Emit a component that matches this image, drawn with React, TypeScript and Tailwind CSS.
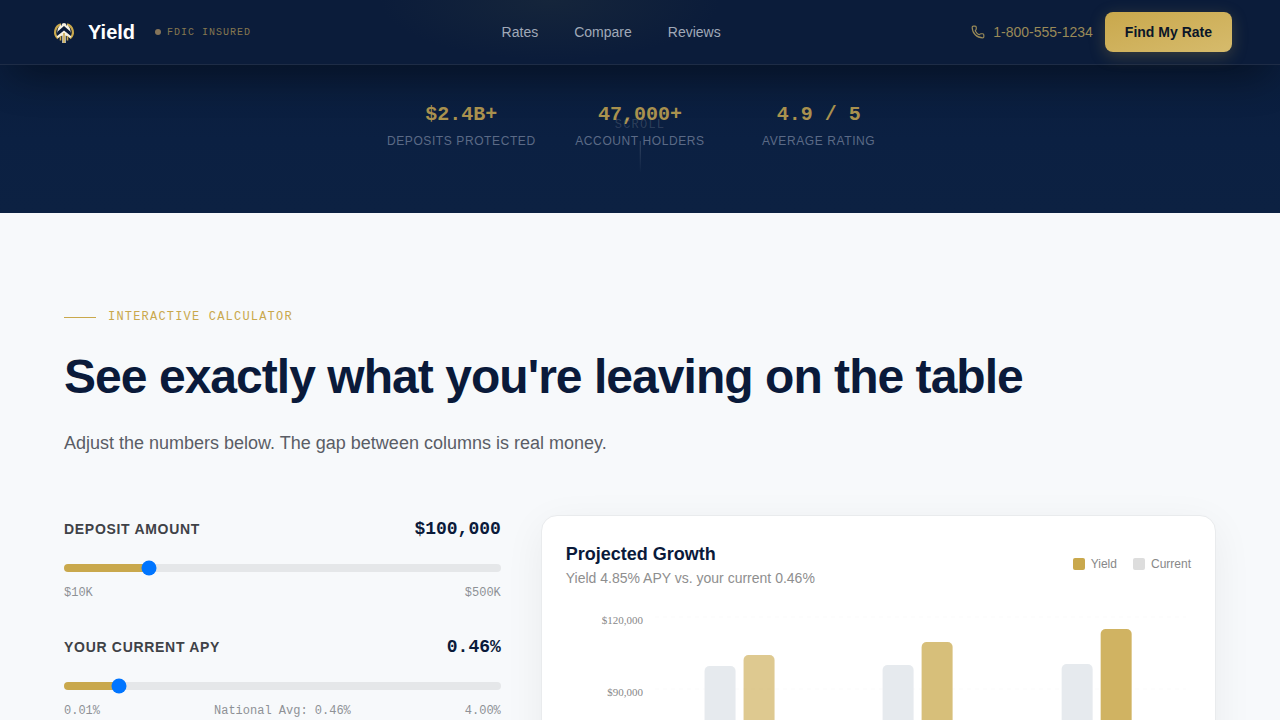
import * as React from "react"
import { Phone } from "lucide-react"

const navLinks = ["Rates", "Compare", "Reviews"]

const stats = [
  { value: "$2.4B+", label: "Deposits Protected" },
  { value: "47,000+", label: "Account Holders" },
  { value: "4.9 / 5", label: "Average Rating" },
]

const bars = [
  { label: "Year 1", x: 139, current: 54, gain: 43, opacity: 0.62 },
  { label: "Year 3", x: 317, current: 53, gain: 30, opacity: 0.74 },
  { label: "Year 5", x: 496, current: 52, gain: 17, opacity: 0.88 },
]

const ticks = [
  { label: "$120,000", y: 5 },
  { label: "$90,000", y: 77 },
  { label: "$60,000", y: 149 },
  { label: "$30,000", y: 221 },
  { label: "$0", y: 293 },
]

const BASELINE = 293

function Logo() {
  return (
    <svg viewBox="0 0 32 32" className="h-8 w-8" aria-hidden="true">
      <path d="M10 22.5A8.200 8.200 0 0 1 13 8.400M22 22.500A8.200 8.200 0 0 0 19 8.400" fill="none" stroke="#c9a84c" strokeWidth="2.2" />
      <path d="M9.500 16.500c-.5-4 2.500-8.500 6.500-9.500 4 1 7 5.500 6.500 9.500L16 12z" fill="#f6f1e2" />
      <path d="M13.500 6.500v3M18.500 6.500v3" stroke="#0b1c3a" strokeWidth="0.8" />
      <path d="M10.500 16.500 16 11.500l5.500 5" fill="none" stroke="#0b1c3a" strokeWidth="2.400" />
      <path d="M8.500 20.500 16 14.500l7.500 6-1.500 1.500-4.300-2.600V27h-3.400v-7.600L10 22z" fill="#f6f1e2" />
      <path d="M16 17v10M12.500 20v4.500M19.500 20v4.500" stroke="#c9a84c" strokeWidth="1.6" />
    </svg>
  )
}

function Header() {
  return (
    <header className="relative z-10 border-b border-[#1e2c46] bg-[#0b1c3a] bg-[radial-gradient(ellipse_170px_60px_at_43%_0%,#15253b,transparent)] shadow-[0_20px_40px_-12px_rgba(0,0,0,0.45)]">
      <div className="flex h-16 items-center justify-between px-12">
        <div className="flex items-center">
          <a href="#" className="flex items-center gap-2 text-xl font-bold text-white">
            <Logo />
            Yield
          </a>
          <span className="ml-5 flex items-center gap-1.5 font-['Liberation_Mono',monospace] text-[10px] tracking-widest text-[#857750]">
            <span className="h-1.5 w-1.5 rounded-full bg-[#85745a]" />
            FDIC INSURED
          </span>
        </div>

        <nav className="flex items-center gap-9 text-sm text-[#a0a9b8]">
          {navLinks.map((link) => (
            <a key={link} href={"#" + link.toLowerCase()}>{link}</a>
          ))}
        </nav>

        <div className="flex items-center gap-3">
          <a href="tel:18005551234" className="flex items-center gap-2 text-sm text-[#9a8a58]">
            <Phone className="h-3.5 w-3.5" />
            1-800-555-1234
          </a>
          <button className="h-10 rounded-lg bg-linear-to-br from-[#c9a84c] to-[#d6bb6c] px-5 text-sm font-semibold text-[#0a1628] shadow-[0_4px_16px_rgba(201,168,76,0.25)]">
            Find My Rate
          </button>
        </div>
      </div>
    </header>
  )
}

function Hero() {
  return (
    <section className="relative bg-linear-to-b from-[#0a1d3c] via-[#0b2042] to-[#0c2142] px-16 pt-9 pb-16">
      <div className="mx-auto grid max-w-lg grid-cols-3 gap-6 text-center">
        {stats.map((stat) => (
          <div key={stat.label}>
            <div className="font-['Liberation_Mono',monospace] text-xl font-bold text-[#ab934f]">{stat.value}</div>
            <div className="mt-1 text-xs tracking-wider whitespace-nowrap text-[#5b6a86] uppercase">{stat.label}</div>
          </div>
        ))}
      </div>
      <div className="absolute bottom-10 left-1/2 flex -translate-x-1/2 flex-col items-center gap-2">
        <span className="font-['Liberation_Mono',monospace] text-xs tracking-widest text-white/15">SCROLL</span>
        <span className="h-8 w-px bg-linear-to-b from-white/20 to-transparent" />
      </div>
    </section>
  )
}

interface SliderFieldProps {
  id: string
  label: string
  display: string
  min: number
  max: number
  step: number
  value: number
  hints: string[]
  onChange: (value: number) => void
}

function SliderField({ id, label, display, min, max, step, value, hints, onChange }: SliderFieldProps) {
  const percent = ((value - min) / (max - min)) * 100

  return (
    <div>
      <div className="flex items-center justify-between">
        <label htmlFor={id} className="text-sm font-semibold tracking-wider text-[#3f4247] uppercase">{label}</label>
        <span className="font-['Liberation_Mono',monospace] text-lg font-bold text-[#0a1a3a]">{display}</span>
      </div>
      <div className="mt-4 flex h-[18px] items-center">
        <input
          id={id}
          type="range"
          min={min}
          max={max}
          step={step}
          value={value}
          onChange={(e) => onChange(Number(e.target.value))}
          className="h-2 w-full cursor-pointer appearance-none rounded-full"
          style={{ background: `linear-gradient(to right, #c9a84c ${percent}%, #e5e7e9 ${percent}%)` }}
        />
      </div>
      <div className="mt-2 flex justify-between font-['Liberation_Mono',monospace] text-xs text-[#8e9196]">
        {hints.map((hint) => (
          <span key={hint}>{hint}</span>
        ))}
      </div>
    </div>
  )
}

function GrowthChart() {
  return (
    <svg viewBox="0 0 625 328" className="mt-6 w-full" role="img" aria-label="Projected growth by year">
      {ticks.map((tick) => (
        <g key={tick.label}>
          <line x1="89" x2="620" y1={tick.y} y2={tick.y} stroke="#000" strokeOpacity="0.02" strokeDasharray="4 4" />
          <text x="77" y={tick.y + 7} textAnchor="end" fontSize="11" fill="#888" className="font-['Liberation_Serif',serif]">
            {tick.label}
          </text>
        </g>
      ))}
      {bars.map((bar) => (
        <g key={bar.label}>
          <rect x={bar.x - 0.5} y={bar.current} width="31" height={BASELINE - bar.current} rx="5" fill="#e6eaee" />
          <rect x={bar.x + 38.5} y={bar.gain} width="31" height={BASELINE - bar.gain} rx="5" fill="#c9a84c" fillOpacity={bar.opacity} />
          <text x={bar.x + 34} y="312" textAnchor="middle" fontSize="11" fill="#888" className="font-['Liberation_Serif',serif]">
            {bar.label}
          </text>
        </g>
      ))}
    </svg>
  )
}

function Calculator() {
  const [deposit, setDeposit] = React.useState(100000)
  const [apy, setApy] = React.useState(0.46)

  return (
    <section className="px-16 pt-24 pb-24">
      <div className="mx-auto max-w-6xl">
        <div className="flex items-center gap-3">
          <span className="h-px w-8 bg-[#c9a84c]" />
          <span className="font-['Liberation_Mono',monospace] text-xs tracking-widest text-[#c9a84c]">INTERACTIVE CALCULATOR</span>
        </div>
        <h2 className="mt-6 text-5xl leading-14 font-bold tracking-[-0.02em] text-[#0a1a3a]">
          See exactly what you're leaving on the table
        </h2>
        <p className="mt-6 text-lg leading-7 text-[#5a5d66]">
          Adjust the numbers below. The gap between columns is real money.
        </p>

        <div className="mt-[58px] grid grid-cols-5 items-start gap-10">
          <div className="col-span-2 flex flex-col gap-8">
            <SliderField
              id="deposit"
              label="Deposit Amount"
              display={"$" + deposit.toLocaleString("en-US")}
              min={10000}
              max={500000}
              step={5000}
              value={deposit}
              hints={["$10K", "$500K"]}
              onChange={setDeposit}
            />
            <SliderField
              id="apy"
              label="Your Current APY"
              display={apy.toFixed(2) + "%"}
              min={0.01}
              max={4}
              step={0.01}
              value={apy}
              hints={["0.01%", "National Avg: 0.46%", "4.00%"]}
              onChange={setApy}
            />
          </div>

          <div className="col-span-3 rounded-2xl border border-[#e9ebed] bg-white p-6 shadow-[0_10px_40px_rgba(10,22,40,0.06)]">
            <div className="flex items-center justify-between">
              <div>
                <h3 className="text-lg font-bold text-[#0a1a3a]">Projected Growth</h3>
                <p className="text-sm text-[#8e8e8e]">Yield 4.85% APY vs. your current {apy.toFixed(2)}%</p>
              </div>
              <div className="flex items-center gap-4 text-xs text-[#888]">
                <span className="flex items-center gap-1.5">
                  <span className="h-3 w-3 rounded-xs bg-[#c9a84c]" />
                  Yield
                </span>
                <span className="flex items-center gap-1.5">
                  <span className="h-3 w-3 rounded-xs bg-[#dddddd]" />
                  Current
                </span>
              </div>
            </div>
            <GrowthChart />
          </div>
        </div>
      </div>
    </section>
  )
}

export default function App() {
  return (
    <div className="min-h-screen bg-[#f7f9fb] font-['Liberation_Sans',Arial,sans-serif]">
      <Header />
      <Hero />
      <Calculator />
    </div>
  )
}
